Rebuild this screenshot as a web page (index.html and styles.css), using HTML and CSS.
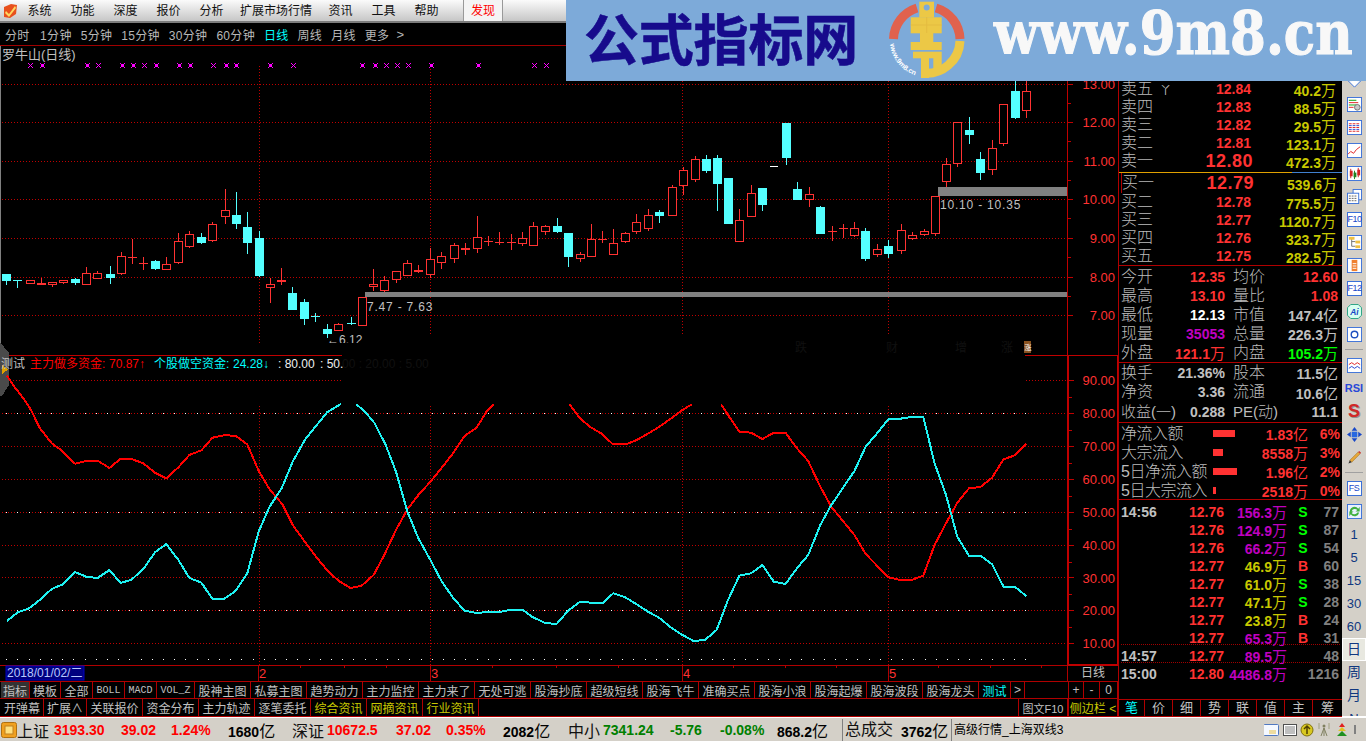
FILE: index.html
```html
<!DOCTYPE html>
<html lang="zh-CN">
<head>
<meta charset="utf-8">
<title>罗牛山(日线)</title>
<link rel="stylesheet" href="styles.css">
</head>
<body>
<div class="app">
  <header class="menu">
    <svg class="applogo" viewBox="0 0 16 16"><path d="M2 4 L9 1 L15 2 L14 11 L8 15 L2 14 Z" fill="#e8501c"/><path d="M4 8 L7 11 L13 3 L14 5 L7 14 L3 10 Z" fill="#ffd860"/></svg>
    <span class="mi">系统</span><span class="mi">功能</span><span class="mi">深度</span><span class="mi">报价</span><span class="mi">分析</span><span class="mi wide">扩展市场行情</span><span class="mi">资讯</span><span class="mi">工具</span><span class="mi">帮助</span>
    <span class="mi find">发现</span>
  </header>
  <nav class="tabs">
    <span class="t0">分时</span><span>1分钟</span><span>5分钟</span><span>15分钟</span><span>30分钟</span><span>60分钟</span><span class="on">日线</span><span>周线</span><span>月线</span><span>更多</span><span class="gt">&gt;</span>
  </nav>
  <main class="main">
    <section class="left">
      <svg id="chart" class="chart" viewBox="0 46 1118 636" width="1118" height="636">
        <g id="plot"></g>
        <text x="2" y="59" class="tx gr13">罗牛山(日线)</text>
        <text x="367" y="311" class="tx gr12 sp">7.47 - 7.63</text>
        <text x="940" y="209" class="tx gr12 sp">10.10 - 10.35</text>
        <g clip-path="url(#cut)"><text x="327" y="344" class="tx gr12">←6.12</text></g>
        <text x="795" y="352" class="tx ghost">跌</text><text x="886" y="352" class="tx ghost">财</text><text x="955" y="352" class="tx ghost">增</text><text x="1001" y="352" class="tx ghost">涨</text>
        <rect x="1024" y="341" width="7" height="12" fill="#8a5220"/><text x="1024.5" y="350" class="tx tiny">涨</text>
        <g class="tx ax">
          <text x="1115" y="89">13.00</text><text x="1115" y="127">12.00</text><text x="1115" y="166">11.00</text><text x="1115" y="204">10.00</text><text x="1115" y="243">9.00</text><text x="1115" y="282">8.00</text><text x="1115" y="320">7.00</text>
          <text x="1115" y="385">90.00</text><text x="1115" y="418">80.00</text><text x="1115" y="451">70.00</text><text x="1115" y="484">60.00</text><text x="1115" y="517">50.00</text><text x="1115" y="550">40.00</text><text x="1115" y="583">30.00</text><text x="1115" y="615">20.00</text><text x="1115" y="648">10.00</text>
        </g>
        <text x="1" y="368" class="tx gr12">测试</text>
        <text x="30" y="368" class="tx rd">主力做多资金:</text><text x="109" y="368" class="tx rd">70.87</text><text x="139" y="368" class="tx rd">↑</text>
        <text x="154" y="368" class="tx cy">个股做空资金:</text><text x="233" y="368" class="tx cy">24.28</text><text x="263" y="368" class="tx cy">↓</text>
        <text x="278" y="368" class="tx wh">: 80.00</text><text x="320" y="368" class="tx wh">: 50.</text>
        <text x="342" y="368" class="tx ghost">00 : 20.00 : 5.00</text>
        <rect x="6" y="666" width="78" height="14" fill="#000080" stroke="#0000c0"/>
        <text x="7" y="677" class="tx dt">2018/01/02/二</text>
        <text x="259" y="678" class="tx mo">2</text><text x="431" y="678" class="tx mo">3</text><text x="683" y="678" class="tx mo">4</text><text x="889" y="678" class="tx mo">5</text>
        <text x="1093" y="677" class="tx gr12 mid">日线</text>
        <defs><clipPath id="cut"><rect x="320" y="330" width="50" height="13"/></clipPath></defs>
      </svg>
      <div class="brow one">
        <span class="cell sel w28">指标</span><span class="cell w31">模板</span><span class="cell w32">全部</span><span class="cell w32 mono">BOLL</span><span class="cell w32 mono">MACD</span><span class="cell w38 mono">VOL_Z</span><span class="cell w56">股神主图</span><span class="cell w56">私募主图</span><span class="cell w56">趋势动力</span><span class="cell w56">主力监控</span><span class="cell w56">主力来了</span><span class="cell w56">无处可逃</span><span class="cell w56">股海抄底</span><span class="cell w56">超级短线</span><span class="cell w56">股海飞牛</span><span class="cell w56">准确买点</span><span class="cell w56">股海小浪</span><span class="cell w56">股海起爆</span><span class="cell w56">股海波段</span><span class="cell w56">股海龙头</span><span class="cell w32 cyan">测试</span><span class="cell w14">&gt;</span>
        <span class="side"><span class="cell w16 first">+</span><span class="cell w16">-</span><span class="cell w18">0</span></span>
      </div>
      <div class="brow two">
        <span class="cell w43">开弹幕</span><span class="cell w43">扩展∧</span><span class="cell w56">关联报价</span><span class="cell w56">资金分布</span><span class="cell w56">主力轨迹</span><span class="cell w56">逐笔委托</span><span class="cell w56 yel">综合资讯</span><span class="cell w56 yel">网摘资讯</span><span class="cell w56 yel">行业资讯</span>
        <span class="side"><span class="cell w50l f10">图文F10</span><span class="cell w50 yel first">侧边栏&nbsp;&lt;</span></span>
      </div>
    </section>

    <section class="panel">
      <div class="book">
        <div class="ob"><span class="lb">卖五</span><span class="yen">丫</span><span class="pr r">12.84</span><span class="vol y">40.2<i>万</i></span></div>
        <div class="ob"><span class="lb">卖四</span><span class="pr r">12.83</span><span class="vol y">88.5<i>万</i></span></div>
        <div class="ob"><span class="lb">卖三</span><span class="pr r">12.82</span><span class="vol y">29.5<i>万</i></span></div>
        <div class="ob"><span class="lb">卖二</span><span class="pr r">12.81</span><span class="vol y">123.1<i>万</i></span></div>
        <div class="ob"><span class="lb">卖一</span><span class="pr r big">12.80</span><span class="vol y">472.3<i>万</i></span></div>
      </div>
      <div class="split"></div>
      <div class="book buy">
        <div class="ob first"><span class="lb">买一</span><span class="pr r big">12.79</span><span class="vol y">539.6<i>万</i></span></div>
        <div class="ob"><span class="lb">买二</span><span class="pr r">12.78</span><span class="vol y">775.5<i>万</i></span></div>
        <div class="ob"><span class="lb">买三</span><span class="pr r">12.77</span><span class="vol y">1120.7<i>万</i></span></div>
        <div class="ob"><span class="lb">买四</span><span class="pr r">12.76</span><span class="vol y">323.7<i>万</i></span></div>
        <div class="ob"><span class="lb">买五</span><span class="pr r">12.75</span><span class="vol y">282.5<i>万</i></span></div>
      </div>
      <div class="stats s19">
        <span class="lb">今开</span><b class="r">12.35</b><span class="lb l2">均价</span><b class="r">12.60</b>
        <span class="lb">最高</span><b class="r">13.10</b><span class="lb l2">量比</span><b class="r">1.08</b>
        <span class="lb">最低</span><b class="w">12.13</b><span class="lb l2">市值</span><b class="g">147.4<i>亿</i></b>
        <span class="lb">现量</span><b class="m">35053</b><span class="lb l2">总量</span><b class="g">226.3<i>万</i></b>
        <span class="lb">外盘</span><b class="r">121.1<i>万</i></b><span class="lb l2">内盘</span><b class="gn">105.2<i>万</i></b>
      </div>
      <div class="stats s195">
        <span class="lb">换手</span><b class="g">21.36%</b><span class="lb l2">股本</span><b class="g">11.5<i>亿</i></b>
        <span class="lb">净资</span><b class="g">3.36</b><span class="lb l2">流通</span><b class="g">10.6<i>亿</i></b>
        <span class="lb nw">收益(一)</span><b class="g">0.288</b><span class="lb l2 nw">PE(动)</span><b class="g">11.1</b>
      </div>
      <div class="flow">
        <div class="fr"><span class="lb">净流入额</span><span class="bar" style="width:22px"></span><b class="r">1.83<i>亿</i></b><b class="r">6%</b></div>
        <div class="fr"><span class="lb">大宗流入</span><span class="bar" style="width:10px"></span><b class="r">8558<i>万</i></b><b class="r">3%</b></div>
        <div class="fr"><span class="lb">5日净流入额</span><span class="bar" style="width:24px"></span><b class="r">1.96<i>亿</i></b><b class="r">2%</b></div>
        <div class="fr"><span class="lb">5日大宗流入</span><span class="bar" style="width:3px"></span><b class="r">2518<i>万</i></b><b class="r">0%</b></div>
      </div>
      <div class="ticks">
        <div class="tk"><b class="g">14:56</b><b class="r">12.76</b><b class="m">156.3<i>万</i></b><b class="gn c">S</b><b class="n">77</b></div>
        <div class="tk"><b></b><b class="r">12.76</b><b class="m">124.9<i>万</i></b><b class="gn c">S</b><b class="n">87</b></div>
        <div class="tk"><b></b><b class="r">12.76</b><b class="m">66.2<i>万</i></b><b class="gn c">S</b><b class="n">54</b></div>
        <div class="tk"><b></b><b class="r">12.77</b><b class="y">46.9<i>万</i></b><b class="r c">B</b><b class="n">60</b></div>
        <div class="tk"><b></b><b class="r">12.77</b><b class="y">61.0<i>万</i></b><b class="gn c">S</b><b class="n">38</b></div>
        <div class="tk"><b></b><b class="r">12.77</b><b class="y">47.1<i>万</i></b><b class="gn c">S</b><b class="n">28</b></div>
        <div class="tk"><b></b><b class="r">12.77</b><b class="y">23.8<i>万</i></b><b class="r c">B</b><b class="n">24</b></div>
        <div class="tk dot"><b></b><b class="r">12.77</b><b class="m">65.3<i>万</i></b><b class="r c">B</b><b class="n">31</b></div>
        <div class="tk dot"><b class="g">14:57</b><b class="r">12.77</b><b class="m">89.5<i>万</i></b><b class="c"></b><b class="n">48</b></div>
        <div class="tk"><b class="g">15:00</b><b class="r">12.80</b><b class="m">4486.8<i>万</i></b><b class="c"></b><b class="n">1216</b></div>
      </div>
      <div class="ptabs"><span class="cyan">笔</span><span>价</span><span>细</span><span>势</span><span>联</span><span>值</span><span>主</span><span>筹</span></div>
    </section>

    <aside class="strip">
      <svg class="ic arrow" viewBox="0 0 16 16"><path d="M5 1 H11 V7 H15 L8 14 L1 7 H5 Z" fill="#fff" stroke="#3a70d8"/></svg>
      <svg class="ic" viewBox="0 0 16 16"><rect x=".5" y=".5" width="15" height="15" fill="#fff" stroke="#3a70d8"/><path d="M2 3.500H10M2 8.500H10" stroke="#00a000"/><path d="M2 6H12M2 11H7" stroke="#e02020"/><circle cx="11" cy="11" r="3" fill="#c8c8c8" stroke="#707070"/></svg>
      <svg class="ic" viewBox="0 0 16 16"><rect x=".5" y=".5" width="15" height="15" fill="#fff" stroke="#3a70d8"/><path d="M2 4H14M2 8H14M2 12H14" stroke="#e02020" stroke-dasharray="3 1"/><path d="M2 6H14M2 10H14" stroke="#2040d0" stroke-dasharray="3 1"/></svg>
      <svg class="ic" viewBox="0 0 16 16"><rect x=".5" y=".5" width="15" height="15" fill="#fff" stroke="#3a70d8"/><path d="M1 12L4 9L7 11L10 7L14 4" fill="none" stroke="#e02020"/></svg>
      <svg class="ic" viewBox="0 0 16 16"><rect x=".5" y=".5" width="15" height="15" fill="#fff" stroke="#3a70d8"/><path d="M4 3V13M12 2V12" stroke="#d02020"/><path d="M8 5V14" stroke="#208020"/><rect x="3" y="5" width="3" height="6" fill="#d02020"/><rect x="7" y="7" width="3" height="5" fill="#208020"/><rect x="11" y="4" width="3" height="6" fill="#d02020"/></svg>
      <svg class="ic" viewBox="0 0 16 16"><rect x="6.500" y=".5" width="9" height="11" fill="#fff" stroke="#3a70d8"/><rect x=".5" y="4.500" width="12" height="11" fill="#fff" stroke="#3a70d8"/><path d="M2 7.500H11M2 10H11M2 12.500H11" stroke="#606060" stroke-dasharray="2 1"/></svg>
      <span class="ib">F10</span>
      <svg class="ic" viewBox="0 0 16 16"><rect x=".5" y=".5" width="15" height="15" fill="#fff" stroke="#3a70d8"/><path d="M5 4V12H9M5 7H9" stroke="#707070" fill="none"/><rect x="2" y="2" width="6" height="3" fill="#f0c040"/><rect x="9" y="6" width="5" height="3" fill="#f0c040"/><rect x="9" y="11" width="5" height="3" fill="#f0c040"/></svg>
      <svg class="ic" viewBox="0 0 16 16"><rect x=".5" y=".5" width="15" height="15" fill="#fff" stroke="#3a70d8"/><rect x="5" y="2" width="6" height="12" fill="#f08030"/><path d="M6 6H10M6 8.500H10M6 11H10" stroke="#fff"/></svg>
      <span class="ib">F12</span>
      <svg class="ic" viewBox="0 0 16 16"><path d="M4 .5H12L15.500 4V12L12 15.500H4L.5 12V4Z" fill="#d8fff0" stroke="#20a080"/><text x="8" y="12" class="icg">Ai</text></svg>
      <svg class="ic" viewBox="0 0 16 16"><rect x=".5" y=".5" width="15" height="15" fill="#fff" stroke="#3a70d8"/><circle cx="8" cy="8" r="3.500" fill="none" stroke="#2050c0" stroke-width="1.500"/></svg>
      <span class="sep"></span>
      <svg class="ic" viewBox="0 0 16 16"><rect x=".5" y=".5" width="15" height="15" fill="#fff" stroke="#3a70d8"/><path d="M2 7L5 5L8 7L11 5L14 7" fill="none" stroke="#e02020"/><path d="M2 11L5 9L8 11L11 9L14 11" fill="none" stroke="#2040d0"/></svg>
      <span class="it rsi">RSI</span>
      <span class="it dollar">S</span>
      <svg class="ic" viewBox="0 0 16 16"><path d="M8 0L11 4H5ZM8 16L5 12H11ZM0 8L4 5V11ZM16 8L12 11V5Z" fill="#1848c8"/><rect x="5" y="5" width="6" height="6" fill="#2868e0"/></svg>
      <svg class="ic" viewBox="0 0 16 16"><path d="M3 11L12 2L14 4L5 13Z" fill="#e8a838" stroke="#906010" stroke-width=".5"/><path d="M12 2L14 4L15 3L13 1Z" fill="#d03030"/><path d="M3 11L5 13L1.500 14.500Z" fill="#303030"/></svg>
      <span class="sep"></span>
      <span class="ib">FS</span>
      <svg class="ic" viewBox="0 0 16 16"><rect x=".5" y=".5" width="15" height="15" fill="#e8f0ff" stroke="#3a70d8"/><path d="M3 8A5 5 0 0 1 12 5L13.500 3V8H9L11 6.500A3.500 3.500 0 0 0 5 8ZM13 9A5 5 0 0 1 4 11L2.500 13V8H7L5 9.500A3.500 3.500 0 0 0 11 9Z" fill="#40b040"/></svg>
      <span class="it per">1</span><span class="it per">5</span><span class="it per">15</span><span class="it per">30</span><span class="it per">60</span><span class="it per cj act">日</span><span class="it per cj">周</span><span class="it per cj">月</span><span class="it per">N</span>
    </aside>

    <div class="banner">
      <span class="bt">公式指标网</span>
      <svg class="seal" viewBox="888 0 78 81">
        <path d="M893.500 39A33.500 33.500 0 0 1 917 8M936 8A33.500 33.500 0 0 1 960 39" fill="none" stroke="#e0624e" stroke-width="9"/>
        <path d="M960 41A33.500 33.500 0 0 1 922 73" fill="none" stroke="#ecc846" stroke-width="9"/>
        <g fill="#ecc846">
          <rect x="919.300" y="1.700" width="14.700" height="16"/>
          <rect x="910.700" y="17.300" width="31" height="16"/>
          <rect x="920" y="33" width="13.300" height="9"/>
          <rect x="910.700" y="42" width="31" height="8"/>
          <rect x="913" y="51.700" width="28.700" height="6.600"/>
          <rect x="921" y="58" width="8" height="20"/>
          <rect x="933.300" y="58" width="8.400" height="12"/>
        </g>
        <circle cx="926.700" cy="7.500" r="3" fill="#7daad9"/>
        <path d="M926.700 17V33M910.700 25H942" stroke="#e4bc40"/>
        <defs><path id="arc" d="M890 44A37 37 0 0 0 924 77"/></defs>
        <text class="sealt"><textPath href="#arc">www.9m8.cn</textPath></text>
      </svg>
      <span class="bu">www.9m8.cn</span>
    </div>
  </main>
  <footer class="status">
    <svg class="sq" viewBox="0 0 16 16"><rect x=".5" y=".5" width="15" height="15" rx="2" fill="#f0a020" stroke="#b07010"/><rect x="4" y="4" width="8" height="8" fill="#ffe080" stroke="#c08020"/></svg>
    <span class="si">上证</span><b class="sr">3193.30</b><b class="sr">39.02</b><b class="sr">1.24%</b><b class="sk">1680<i>亿</i></b>
    <span class="si">深证</span><b class="sr">10672.5</b><b class="sr">37.02</b><b class="sr">0.35%</b><b class="sk">2082<i>亿</i></b>
    <span class="si">中小</span><b class="sg">7341.24</b><b class="sg">-5.76</b><b class="sg">-0.08%</b><b class="sk">868.2<i>亿</i></b>
    <span class="si div">总成交</span><b class="sk">3762<i>亿</i></b>
    <span class="scr div">高级行情_上海双线3</span>
    <svg class="sicons" viewBox="1264 718 102 23" width="102" height="23">
      <rect x="1263.500" y="723.500" width="15" height="11" rx="1" fill="#f4f8ff" stroke="#5078c0"/><path d="M1269 730H1276M1269 732H1276" stroke="#e8c040"/>
      <rect x="1283.500" y="723.500" width="13" height="11" fill="#fff" stroke="#505050"/><path d="M1285 726H1295M1285 728H1295M1285 730H1295M1285 732H1295" stroke="#808080"/>
      <circle cx="1307" cy="729" r="6" fill="#d8c820" stroke="#807010"/><path d="M1307 725V733M1304 728L1307 725L1310 728" fill="none" stroke="#504000" stroke-width="1.500"/>
      <path d="M1324 727V735M1321 735L1324 727L1327 735" fill="none" stroke="#808060"/><circle cx="1324" cy="725" r="1.500" fill="#808060"/><path d="M1319 722V728M1329 722V728" stroke="#a0a080"/>
      <path d="M1342 722L1345 726H1339Z" fill="#e02020"/><path d="M1342 726L1346 730H1338Z" fill="#e0c020"/><path d="M1342 730L1347 735H1337Z" fill="#209020"/>
      <path d="M1355 724V733" stroke="#808080" stroke-width="2"/>
    </svg>
  </footer>
</div>
<script src="chart.js"></script>
</body>
</html>
```
FILE: styles.css
```css
* { box-sizing: border-box; }
html, body { margin: 0; padding: 0; background: #000; overflow: hidden; }
body { font-family: "Liberation Sans", "Noto Sans CJK SC", sans-serif; font-size: 12px; color: #c0c0c0; }
i { font-style: normal; }
.app { width: 1366px; height: 741px; display: flex; flex-direction: column; overflow: hidden; }

.menu { height: 23px; display: flex; align-items: center; background: linear-gradient(#fbfbfb, #c6c6c6); border-bottom: 2px solid #7c7c7c; color: #111; padding-left: 2px; flex: none; }
.applogo { width: 16px; height: 16px; margin-right: 0; }
.mi { width: 43px; text-align: center; line-height: 23px; height: 21px; font-size: 12px; }
.mi.wide { width: 86px; }
.mi.find { width: 40px; margin-left: 15px; color: #f00; background: #f4f4f4; border-left: 1px solid #999; border-right: 1px solid #999; }

.tabs { height: 23px; flex: none; display: flex; align-items: center; gap: 9px; padding: 1px 0 0 5px; border-bottom: 1px solid #a00000; font-size: 12px; letter-spacing: .3px; color: #b8b8b8; }
.tabs .on { color: #00ffff; }
.tabs .t0 { margin-right: 1.5px; }
.tabs .gt { font-size: 13px; margin-left: -2px; }

.main { height: 671px; flex: none; display: flex; position: relative; }
.left { width: 1118px; flex: none; display: flex; flex-direction: column; }
.chart { display: block; flex: none; background: #000; }
#plot * { shape-rendering: crispEdges; }
.tx { font-family: "Liberation Sans", "Noto Sans CJK SC", sans-serif; font-size: 12px; }
.gr12 { fill: #c0c0c0; }
.gr13 { fill: #c0c0c0; font-size: 13px; }
.sp { letter-spacing: .8px; }
.mid { text-anchor: middle; }
.ghost { fill: #101010; }
.tiny { font-size: 7px; fill: #fff; }
.ax text { text-anchor: end; fill: #ff3232; font-size: 13px; }
.rd { fill: #f00; } .cy { fill: #0ff; } .wh { fill: #f0f0f0; }
.dt { fill: #b8c8ff; }
.mo { fill: #ff3232; font-size: 13px; }

.brow { display: flex; flex: none; border-bottom: 1px solid #b00000; padding-left: 1px; width: 1118px; position: relative; }
.brow.one { height: 17px; }
.brow.two { height: 18px; }
.cell { display: flex; align-items: center; justify-content: center; border-right: 1px solid #b00000; font-size: 12px; color: #c0c0c0; white-space: nowrap; flex: none; }
.cell.sel { background: #333; }
.cell.mono { font-family: "Liberation Mono", monospace; font-size: 10px; }
.cyan { color: #0ff !important; }
.yel { color: #c8c800 !important; }
.w14 { width: 14px; } .w16 { width: 16px; } .w18 { width: 18px; }
.w28 { width: 29px; } .w31 { width: 31px; } .w32 { width: 32px; } .w38 { width: 38px; }
.w43 { width: 43px; } .w50 { width: 50px; } .w50l { width: 50px; } .w56 { width: 56px; }
.side { margin-left: auto; display: flex; }
.first { border-left: 1px solid #b00000; }
.f10 { border-left: 1px solid #b00000; font-size: 11px; }

.panel { width: 224px; flex: none; border-left: 1px solid #b00000; padding-top: 34px; display: flex; flex-direction: column; height: 671px; }
.panel b { font-size: 14px; white-space: nowrap; }
.panel i { font-weight: 400; font-size: 15px; }
.lb { font-size: 16px; color: #bcbcbc; font-weight: 300; white-space: nowrap; line-height: 18px; }
.r { color: #ff3232; } .y { color: #c8c800; } .g { color: #c0c0c0; } .w { color: #fff; } .m { color: #c000c0; } .gn { color: #00ff00; } .n { color: #808080; }

.book { padding-left: 2px; }
.book.buy { border-bottom: 1px solid #b00000; }
.ob { display: flex; height: 18px; align-items: center; position: relative; }
.ob.first { height: 20px; }
.ob .lb { width: 40px; flex: none; }
.yen { position: absolute; left: 39px; color: #bcbcbc; font-size: 11px; }
.pr, .vol { font-weight: 700; font-size: 14px; text-align: right; flex: none; white-space: nowrap; }
.pr { width: 90px; }
.pr.big { font-size: 18px; letter-spacing: .5px; margin-right: -2px; width: 92px; }
.vol { width: 85px; }
.split { height: 1px; margin-top: 2px; flex: none; background: linear-gradient(90deg, #e0a000 0, #e0a000 173px, #4080d0 173px); }

.stats { display: grid; grid-template-columns: 32px 72px 40px 73px; padding-left: 2px; align-items: center; border-bottom: 1px solid #b00000; }
.stats > b { text-align: right; }
.s19 { grid-auto-rows: 19px; margin-top: 1px; }
.s195 { grid-auto-rows: 19.5px; height: 60px; }
.l2 { padding-left: 8px; }
.nw { font-size: 15px; }

.flow { border-bottom: 1px solid #b00000; height: 77px; padding-left: 2px; }
.fr { height: 19px; display: grid; grid-template-columns: 92px 27px 68px 32px; align-items: center; }
.fr > b { text-align: right; }
.fr .lb { letter-spacing: -.5px; }
.bar { height: 7px; background: #ff3232; display: block; }

.ticks { padding-top: 1px; padding-left: 2px; }
.tk { height: 18px; display: grid; grid-template-columns: 50px 53px 63px 32px 20px; align-items: center; }
.tk > b { text-align: right; }
.tk > b.c { text-align: center; }
.tk > .g { text-align: left; }
.tk > .n { display: flex; justify-content: flex-end; }
.tk.dot { border-bottom: 1px dotted #a00000; margin-right: 2px; }

.ptabs { margin-top: auto; height: 18px; flex: none; display: flex; border-top: 1px solid #b00000; border-bottom: 1px solid #b00000; }
.ptabs span { width: 28px; flex: none; border-right: 1px solid #b00000; text-align: center; font-size: 13px; line-height: 16px; color: #c0c0c0; }
.ptabs span:first-child { width: 26px; }
.ptabs span:last-child { width: 29px; border-right: 0; }

.strip { width: 24px; flex: none; background: #d4d0c8; height: 671px; border-bottom: 1px solid #fff; padding-top: 28px; display: flex; flex-direction: column; align-items: center; overflow: hidden; }
.ic { width: 15px; height: 15px; margin: 4px 0; flex: none; display: block; }
.ic.arrow { margin: 0 0 3.500px; }
.icg { font: italic 700 9px "Liberation Sans", sans-serif; fill: #1848c8; text-anchor: middle; }
.ib { width: 15px; height: 15px; margin: 4px 0; flex: none; background: #fff; border: 1px solid #3a70d8; color: #1848c8; font-size: 9px; line-height: 13px; text-align: center; letter-spacing: -.5px; }
.sep { height: 8px; width: 100%; flex: none; padding: 3px 1px; background: linear-gradient(#a0a0a0, #a0a0a0) center / 18px 1px no-repeat; }
.it { height: 23px; line-height: 23px; text-align: center; flex: none; width: 100%; }
.rsi { color: #2848d8; font-weight: 700; font-size: 11px; }
.dollar { color: #d02828; font-weight: 700; font-size: 18px; text-shadow: 1px 1px 0 #909090; }
.per { color: #103880; font-size: 13px; }
.cj { font-size: 14px; }
.act { background: #e8e8e0; border: 1px solid #fff; height: 23px; line-height: 21px; background-image: radial-gradient(#fff 30%, transparent 30%); background-size: 2px 2px; }

.banner { position: absolute; left: 566px; top: -46px; width: 800px; height: 81px; background: #7daad9; display: flex; align-items: center; padding-left: 18px; overflow: hidden; }
.bt { font-family: "Noto Sans CJK SC", sans-serif; font-weight: 700; font-size: 55px; letter-spacing: -.2px; color: #170b8c; line-height: 60px; width: 277px; margin: 0 -4px 10px 0; flex: none; white-space: nowrap; -webkit-text-stroke: .6px #170b8c; }
.seal { width: 78px; height: 81px; margin-left: 31px; flex: none; }
.sealt { font: 700 7px "Liberation Sans", sans-serif; fill: #fff; }
.bu { margin-left: 28px; margin-bottom: 16px; font-family: "DejaVu Serif", serif; font-weight: 700; font-size: 51.500px; color: #f8f8f8; -webkit-text-stroke: 1px #f8f8f8; transform: scaleY(1.15); transform-origin: center; line-height: 50px; white-space: nowrap; }

.status { height: 24px; flex: none; background: #d4d0c8; border-top: 1px solid #fff; display: grid; grid-template-columns: 17px 37px 67px 50px 57px 64px 35px 69px 50px 57px 65px 35px 67px 50px 57px 65px 59px 50px 313px 102px; align-items: center; color: #000; white-space: nowrap; }
.sq { width: 16px; height: 16px; margin-left: 1px; }
.status b { font-size: 14px; }
.status i { font-weight: 400; font-size: 16px; }
.si { font-size: 16px; color: #111; }
.sr { color: #f00; } .sg { color: #008000; } .sk { color: #000; }
.div { border-left: 1px solid #808080; padding-left: 2px; height: 22px; line-height: 22px; }
.scr { font-size: 12px; }
.sicons { display: block; }
```
FILE: chart.js
```js
(function () {
  var H = 2.904, out = [];
  function add(s) { out.push(s); }
  function hdots(y, x1, x2) { add('<path d="M' + x1 + ' ' + (y + .5) + 'H' + x2 + '" stroke="#c00000" stroke-dasharray="1 2"/>'); }
  function vdots(x, y1, y2) { add('<path d="M' + (x + .5) + ' ' + y1 + 'V' + y2 + '" stroke="#c00000" stroke-dasharray="1 2"/>'); }

  // edge and frames
  add('<rect x="0" y="46" width="1" height="298" fill="#808080"/>');
  [84, 122, 161, 199, 238, 277, 315].forEach(function (y) { hdots(y, 2, 1067); });
  vdots(259, 66, 343); vdots(430, 66, 335); vdots(682, 66, 335); vdots(888, 66, 335);

  // magenta markers
  [[29.8,0],[41.5,1],[87.3,1],[97.5,0],[121.5,1],[133,1],[144,0],[156.4,1],[179.3,1],[190.2,1],[213,0],[225.5,1],[236.4,1],[270.2,1],[293,0],[362.2,1],[374.5,1],[385.5,0],[397,0],[408,0],[431.3,1],[477.5,1],[533.8,0],[545.5,0]].forEach(function (m) {
    var x = Math.round(m[0]), y = 65;
    add('<path d="M' + (x - 2) + ' ' + (y - 2) + 'L' + (x + 3) + ' ' + (y + 3) + 'M' + (x + 3) + ' ' + (y - 2) + 'L' + (x - 2) + ' ' + (y + 3) + '" stroke="#f0f"/>');
    if (m[1]) add('<rect x="' + (x - 1) + '" y="' + (y - 1) + '" width="3" height="3" fill="#f0f"/>');
  });

  // gray support bars
  add('<rect x="365" y="292" width="702" height="5" fill="#808080"/>');
  add('<rect x="938" y="187" width="129" height="9" fill="#808080"/>');

  // candles: [x, high, top, bottom, low, colour]; coordinates read from the 3x crops
  var a = [
    [18,582,582,600,611,'c'],[50,601,601,601,620,'c'],[86,601,601,608,609,'r'],[118,595,610,612,613,'r'],[152,607,607,613,618,'r'],[184,601,601,607,608,'r'],[218,594,597,605,613,'c'],[251,561,580,613,613,'r'],[283,574,580,593,593,'r'],[318,558,583,591,608,'c'],
    [350,517,529,578,581,'r'],[384,478,530,532,548,'r'],[416,532,548,548,566,'r'],[451,540,544,564,567,'c'],[483,532,553,568,568,'r'],[518,460,484,545,549,'r'],[550,454,463,497,500,'r'],[585,460,471,486,489,'c'],[617,427,433,480,483,'r'],[652,327,391,407,429,'r'],
    [684,336,405,429,444,'c'],[718,397,441,486,519,'c'],[751,453,474,585,588,'c'],[783,594,613,620,666,'r'],[817,565,600,602,612,'r'],[849,622,639,687,687,'c'],[884,658,666,714,732,'c'],[916,700,709,709,722,'c'],[951,733,747,758,770,'c'],[983,730,733,749,749,'r'],
    [1018,712,728,728,732,'c'],[1050,652,652,734,734,'r'],[1084,568,611,617,630,'r'],[1116,589,601,629,633,'r'],[1151,572,572,596,606,'r'],[1183,541,550,584,584,'r'],[1215,556,570,572,575,'r'],[1250,505,538,581,590,'r'],[1282,517,529,547,564,'r'],[1317,490,496,533,546,'r'],
    [1349,490,504,506,521,'r'],[1384,408,472,503,516,'r'],[1416,468,482,484,495,'r'],[1450,456,485,487,492,'r'],[1483,462,485,487,507,'r']
  ];
  var b = [
    [-22,456,475,488,495,'r'],[10,427,439,494,494,'r'],[45,435,439,453,461,'r'],[77,415,438,453,456,'c'],[109,459,459,528,558,'c'],[144,517,523,533,543,'r'],[176,433,478,527,527,'r'],[209,454,476,476,486,'r'],[242,447,490,521,521,'r'],[277,455,460,483,486,'r'],
    [309,403,427,452,459,'r'],[344,388,406,443,449,'r'],[376,390,396,405,426,'c'],[411,316,322,404,404,'r'],[443,260,271,314,342,'r'],[478,228,238,296,302,'r'],[510,225,237,270,276,'c'],[542,225,234,309,390,'c'],[576,294,294,429,429,'c'],[608,388,421,482,482,'r'],
    [643,316,340,407,407,'r'],[675,324,324,372,390,'c'],[742,129,129,231,252,'c'],[776,307,327,357,357,'c'],[809,321,343,356,378,'r'],[843,378,381,459,459,'c'],[876,438,452,454,480,'r'],[910,432,443,445,471,'r'],[942,427,445,465,468,'r'],[974,445,453,534,540,'c'],
    [1009,492,508,521,527,'r'],[1041,480,498,519,531,'c'],[1076,433,451,509,518,'r'],[1108,457,466,473,476,'r'],[1143,447,454,461,465,'r'],[1175,349,349,458,465,'r'],[1209,235,253,302,318,'r'],[1241,127,127,248,258,'r'],[1276,111,150,162,189,'c'],[1308,217,237,276,297,'c'],
    [1343,181,205,266,282,'r'],[1375,73,73,188,195,'r'],[1407,2,33,111,114,'c'],[1441,2,34,89,111,'r']
  ];
  function candle(off) {
    return function (c) {
      var x = Math.round(off + c[0] / H), Y = function (v) { return Math.round(80 + v / 3); };
      var col = c[5] === 'r' ? '#ff3232' : '#54ffff';
      var hi = Y(c[1]), t = Y(c[2]), bt = Y(c[3]), lo = Y(c[4]);
      add('<path d="M' + (x + .5) + ' ' + hi + 'V' + (lo + 1) + '" stroke="' + col + '"/>');
      if (bt - t <= 1) {
        add('<rect x="' + (x - 4) + '" y="' + t + '" width="9" height="' + (bt - t + 1) + '" fill="' + col + '"/>');
      } else if (c[5] === 'r') {
        add('<rect x="' + (x - 3.5) + '" y="' + (t + .5) + '" width="8" height="' + (bt - t) + '" fill="#000" stroke="' + col + '"/>');
      } else {
        add('<rect x="' + (x - 4) + '" y="' + t + '" width="9" height="' + (bt - t + 1) + '" fill="' + col + '"/>');
      }
    };
  }
  a.forEach(candle(0));
  b.forEach(candle(530));
  add('<rect x="770" y="166" width="8" height="1" fill="#fff"/>');

  // lower price frame and indicator frame
  add('<rect x="0" y="355" width="342" height="1" fill="#c00000"/>');
  add('<rect x="1025" y="355" width="93" height="1" fill="#c00000"/>');
  add('<rect x="1067" y="81" width="1" height="275" fill="#c00000"/>');
  [84, 122, 161, 199, 238, 277, 315].forEach(function (y) {
    add('<rect x="1068" y="' + y + '" width="5" height="1" fill="#c00000"/>');
    if (y < 310) add('<rect x="1068" y="' + (y + 19) + '" width="3" height="1" fill="#c00000"/>');
  });
  add('<rect x="1067" y="355" width="2" height="311" fill="#c00000"/>');
  add('<rect x="1117" y="355" width="1" height="311" fill="#c00000"/>');
  add('<rect x="1067" y="664" width="51" height="2" fill="#c00000"/>');
  [380, 413, 446, 479, 512, 545, 577, 610, 643].forEach(function (y) {
    add('<rect x="1069" y="' + y + '" width="5" height="1" fill="#c00000"/>');
    if (y < 640) add('<rect x="1069" y="' + (y + 17) + '" width="3" height="1" fill="#c00000"/>');
  });

  // indicator grid
  add('<path d="M7 380.500H342M1026 380.500H1067" stroke="#c00000" stroke-dasharray="1 2"/>');
  [413, 446, 479, 512, 545, 577, 610, 643].forEach(function (y) { hdots(y, 2, 1067); });
  [259, 430, 682, 888].forEach(function (x) { vdots(x, 406, 665); });
  [413, 512, 610, 659].forEach(function (y) {
    for (var i = 0; i <= 91; i++) add('<rect x="' + Math.round(6.2 + 11.2 * i) + '" y="' + y + '" width="1" height="1" fill="#fff"/>');
  });

  // left side handle
  add('<path d="M0 342L9 353V385L2 396H0Z" fill="#4a4a4a"/>');
  add('<path d="M2 365L8 369.500L2 374Z" fill="#e0a000"/>');

  // curves
  function curve(pts, off, col) {
    add('<polyline points="' + pts.map(function (p) { return (off + p[0] / H).toFixed(1) + ',' + (355 + p[1] / 3).toFixed(1); }).join(' ') + '" fill="none" stroke="' + col + '" stroke-width="2" stroke-linejoin="round"/>');
  }
  curve([[20,62],[45,100],[68,130],[90,165],[115,218],[150,265],[180,287],[218,326],[250,318],[285,318],[318,339],[350,311],[382,312],[416,325],[450,353],[483,370],[518,337],[550,300],[585,286],[617,248],[650,241],[684,242],[718,268],[751,347],[783,403],[820,448],[850,510],[885,560],[916,603],[951,647],[984,678],[1018,699],[1050,692],[1085,660],[1116,600],[1150,525],[1183,463],[1215,420],[1250,380],[1283,338],[1317,293],[1349,243],[1384,218],[1416,165],[1435,148]], 0, '#ff0000');
  curve([[115,148],[145,190],[175,216],[208,236],[240,267],[282,267],[310,255],[344,235],[376,215],[410,190],[443,165],[470,148]], 530, '#ff0000');
  curve([[555,148],[575,180],[608,230],[642,233],[675,252],[708,233],[742,233],[775,280],[808,318],[843,395],[875,455],[908,497],[942,540],[975,597],[1008,632],[1041,667],[1075,675],[1108,675],[1142,662],[1175,570],[1208,505],[1241,443],[1275,400],[1308,396],[1342,368],[1375,313],[1408,301],[1441,266]], 530, '#ff0000');
  curve([[20,798],[52,772],[83,761],[115,735],[150,702],[183,688],[218,651],[250,665],[283,669],[318,645],[350,684],[382,674],[416,642],[450,592],[483,567],[518,615],[550,669],[585,683],[617,732],[650,732],[684,708],[718,656],[751,530],[783,455],[818,400],[850,320],[885,255],[916,215],[950,172],[990,147]], 0, '#1ef2f2');
  curve([[1035,148],[1060,170],[1088,205],[1120,270],[1150,350],[1183,470],[1215,550],[1250,615],[1283,680],[1317,730],[1349,767],[1384,774],[1416,771],[1450,771],[1483,764],[1517,764],[1549,788]], 0, '#1ef2f2');
  curve([[0,782],[45,805],[78,806],[110,768],[145,740],[178,743],[212,743],[242,715],[275,726],[310,748],[343,770],[376,789],[410,818],[443,840],[475,858],[508,855],[542,825],[575,735],[608,662],[642,655],[675,630],[708,680],[742,687],[775,640],[808,600],[843,510],[875,450],[908,400],[942,348],[975,275],[1008,235],[1041,192],[1075,191],[1108,186],[1142,186],[1175,325],[1208,420],[1241,545],[1275,602],[1308,602],[1342,628],[1375,695],[1408,695],[1441,723]], 530, '#1ef2f2');

  // date strip
  add('<rect x="0" y="665" width="1067" height="1" fill="#b00000"/>');
  add('<rect x="0" y="681" width="1118" height="1" fill="#b00000"/>');
  add('<rect x="1067" y="666" width="1" height="16" fill="#b00000"/>');
  [258, 430, 682, 888].forEach(function (x) { add('<rect x="' + x + '" y="666" width="1" height="15" fill="#b00000"/>'); });
  [300, 344, 386, 492, 556, 618, 733, 785, 836, 938, 990, 1041].forEach(function (x) { add('<rect x="' + x + '" y="666" width="1" height="2" fill="#b00000"/>'); });

  document.getElementById('plot').innerHTML = out.join('');
})();
```
